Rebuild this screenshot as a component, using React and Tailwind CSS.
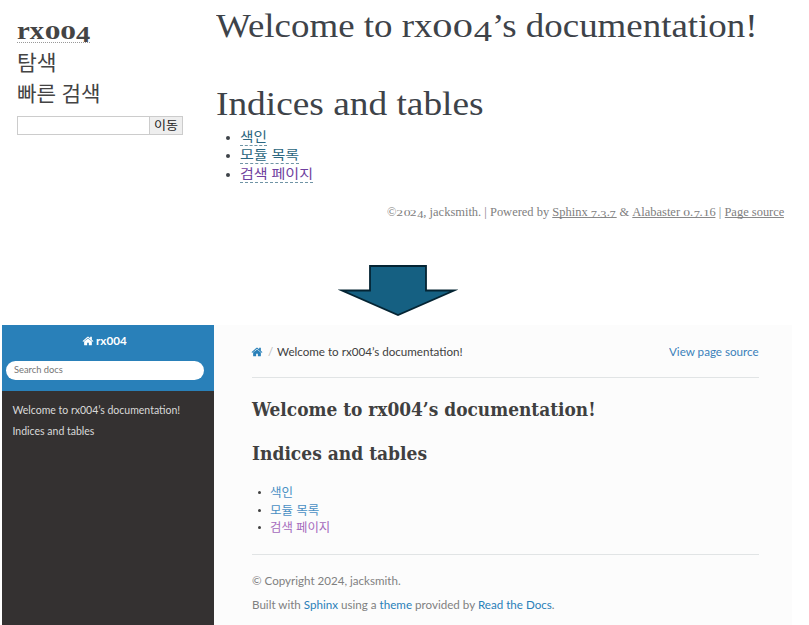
import { useLayoutEffect, useRef } from "react";

// Single line of text stretched horizontally to fill the width of its box.
function Fit({ className = "", children }) {
  const box = useRef(null);
  const line = useRef(null);
  useLayoutEffect(() => {
    const natural = line.current.offsetWidth;
    if (natural) {
      line.current.style.transform = `scaleX(${box.current.offsetWidth / natural})`;
    }
  }, []);
  return (
    <span ref={box} className={`block whitespace-nowrap ${className}`}>
      <span ref={line} className="inline-block origin-left">
        {children}
      </span>
    </span>
  );
}

// Old-style numerals: 0, 1, 2 sit at x-height, 3, 4, 5, 7, 9 descend.
function Num({ children }) {
  return [...children].map((c, i) => {
    if ("012".includes(c))
      return (
        <span key={i} className="inline-block w-[0.75em] scale-x-[1.5] text-center text-[0.73em] leading-none">
          {c}
        </span>
      );
    if ("34579".includes(c))
      return (
        <span
          key={i}
          className="inline-block w-[0.6em] translate-y-[0.15em] scale-x-[1.15] text-center text-[0.86em] leading-none"
        >
          {c}
        </span>
      );
    return c;
  });
}

function Home({ className }) {
  return (
    <svg viewBox="0 0 1792 1792" className={className} fill="currentColor">
      <path d="M1472 992v480q0 26-19 45t-45 19h-384v-384h-256v384h-384q-26 0-45-19t-19-45v-480q0-1 .5-3t.5-3l575-474 575 474q1 2 1 6zm223-69l-62 74q-8 9-21 11h-3q-13 0-21-7l-692-577-692 577q-12 8-24 7-13-2-21-11l-62-74q-8-10-7-23.5t11-21.5l719-599q32-26 76-26t76 26l244 204v-195q0-14 9-23t23-9h192q14 0 23 9t9 23v408l219 182q10 8 11 21.5t-7 23.5z" />
    </svg>
  );
}

function Alabaster() {
  return (
    <section className="flex h-[325px] flex-col font-['Liberation_Serif','Noto_Sans_CJK_KR',serif] text-[#3e4349]">
      <div className="flex h-[200px]">
        <aside className="w-[216px] pl-[17px] pt-[19px] text-[#444]">
          <div className="h-6 w-[73px] border-b border-dotted border-[#999]">
            <Fit className="w-[73px] text-[26px] font-bold leading-[23px]">
              rx<Num>004</Num>
            </Fit>
          </div>
          <Fit className="mt-[5px] w-10 text-[21px] font-normal leading-[30px]">탐색</Fit>
          <Fit className="mt-[1px] w-[84px] text-[21px] font-normal leading-[30px]">빠른 검색</Fit>
          <div className="mt-[7px] flex h-[19px] w-[166px] border border-[#ccc]">
            <div className="flex-1 bg-white" />
            <div className="flex w-[33px] items-center border-l border-[#ccc] bg-[#eee] pl-1 text-[#222]">
              <Fit className="w-6 text-[12px] leading-4">이동</Fit>
            </div>
          </div>
        </aside>
        <main className="pt-[6px]">
          <h1>
            <Fit className="w-[542px] text-[34px] leading-10">
              Welcome to rx<Num>004</Num>’s documentation!
            </Fit>
          </h1>
          <h1 className="mt-[38px]">
            <Fit className="w-[268px] text-[34px] leading-10">Indices and tables</Fit>
          </h1>
          <ul className="mt-1 text-[13px] font-normal text-[#2a6680]">
            <AlabasterItem>
              <Fit className="w-[27px] leading-[18px]">색인</Fit>
            </AlabasterItem>
            <AlabasterItem>
              <Fit className="w-[59px] leading-[18px]">모듈 목록</Fit>
            </AlabasterItem>
            <AlabasterItem visited>
              <Fit className="w-[73px] leading-[18px]">검색 페이지</Fit>
            </AlabasterItem>
          </ul>
        </main>
      </div>
      <footer className="flex h-[65px] justify-end pr-[25px] pt-1 text-[#808080]">
        <Fit className="h-4 w-[397px] text-[12px] leading-4">
          ©<Num>2024</Num>, jacksmith. | Powered by{" "}
          <FooterLink>
            Sphinx <Num>7.3.7</Num>
          </FooterLink>{" "}
          &amp;{" "}
          <FooterLink>
            Alabaster <Num>0.7.16</Num>
          </FooterLink>{" "}
          | <FooterLink>Page source</FooterLink>
        </Fit>
      </footer>
      <svg viewBox="0 0 120 52" className="ml-[338px] h-[52px] w-[120px]">
        <path
          d="M32 1h56v24.500h28L60 50 4 25.500h28z"
          fill="#156082"
          stroke="#042433"
          strokeWidth="1.800"
          strokeMiterlimit="10"
        />
      </svg>
    </section>
  );
}

function AlabasterItem({ visited, children }) {
  return (
    <li className="flex h-[18.3px] items-start pl-[10px]">
      <span className="mr-[10px] mt-[8px] h-1 w-1 rounded-full bg-[#3e4349]" />
      <span className={`h-[18px] border-b border-dashed border-[#6f94a5] ${visited ? "text-[#6f3fa0]" : ""}`}>
        {children}
      </span>
    </li>
  );
}

function FooterLink({ children }) {
  return <span className="inline-block h-[14px] border-b border-[#888] leading-4">{children}</span>;
}

function RtdItem({ children }) {
  return (
    <li className="flex h-[17.5px] items-center pl-[6px]">
      <span className="mr-[9px] h-[3px] w-[3px] rounded-full bg-[#404040]" />
      {children}
    </li>
  );
}

function ReadTheDocs() {
  return (
    <section className="flex h-[300px] pl-[2px] font-[Lato,'Noto_Sans_CJK_KR',sans-serif]">
      <nav className="w-[212px] bg-[#343131] text-[#d9d9d9]">
        <div className="flex h-[65.500px] flex-col bg-[#2980b9] pl-1 pt-2">
          <div className="flex h-4 items-center pl-[76px] text-white">
            <Home className="mr-[2px] h-3 w-3" />
            <Fit className="w-[31px] text-[12px] font-bold leading-4">rx004</Fit>
          </div>
          <div className="mt-[12px] flex h-[19px] w-[198px] items-start rounded-full bg-white pl-2 text-[#757575]">
            <Fit className="w-[49px] text-[9.5px] leading-[17px]">Search docs</Fit>
          </div>
        </div>
        <div className="pl-[10.500px] pt-[10px] text-[10.500px]">
          <Fit className="w-[168px] leading-[18px]">Welcome to rx004’s documentation!</Fit>
          <Fit className="mt-[3px] w-[82px] leading-[18px]">Indices and tables</Fit>
        </div>
      </nav>
      <main className="w-[578px] bg-[#fcfcfc] pl-[38px] pr-[33px] pt-[18px] text-[#404040]">
        <div className="flex h-[35px] items-start border-b border-[#e1e4e5] text-[11.5px] leading-[18px]">
          <Home className="-ml-px mt-[3px] h-3 w-3 text-[#2980b9]" />
          <span className="ml-[5px] text-[#bbb]">/</span>
          <Fit className="ml-[4px] w-[186px]">Welcome to rx004’s documentation!</Fit>
          <Fit className="ml-auto w-[90px] text-[#3a80b9]">View page source</Fit>
        </div>
        <h1 className="mt-[18px] font-['Roboto_Slab','DejaVu_Serif_Condensed','DejaVu_Serif',serif] text-[19px] font-bold">
          <Fit className="w-[344px] leading-[26px]">Welcome to rx004’s documentation!</Fit>
          <Fit className="mt-[18px] w-[175px] leading-[26px]">Indices and tables</Fit>
        </h1>
        <ul className="mt-[18px] text-[12px] font-normal leading-[17px] text-[#4a90c4]">
          <RtdItem>
            <Fit className="w-[23px]">색인</Fit>
          </RtdItem>
          <RtdItem>
            <Fit className="w-[49px]">모듈 목록</Fit>
          </RtdItem>
          <RtdItem>
            <Fit className="w-[60px] text-[#a56abd]">검색 페이지</Fit>
          </RtdItem>
        </ul>
        <footer className="mt-[17px] border-t border-[#e1e4e5] pt-[17px] text-[11.5px] leading-[18px] text-[#808080]">
          <Fit className="w-[149px]">© Copyright 2024, jacksmith.</Fit>
          <Fit className="mt-[6px] w-[303px]">
            Built with <span className="text-[#2980b9]">Sphinx</span> using a{" "}
            <span className="text-[#2980b9]">theme</span> provided by{" "}
            <span className="text-[#2980b9]">Read the Docs</span>.
          </Fit>
        </footer>
      </main>
    </section>
  );
}

export default function App() {
  return (
    <div className="h-[625px] w-[809px] overflow-hidden bg-white">
      <Alabaster />
      <ReadTheDocs />
    </div>
  );
}
